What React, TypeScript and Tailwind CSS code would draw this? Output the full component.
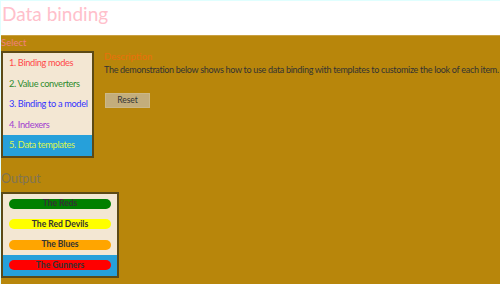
import React, { useState } from 'react';

const scenarios = [
  { title: '1. Binding modes', color: 'text-[#ff4a4a]' },
  { title: '2. Value converters', color: 'text-[#2e8b2e]' },
  { title: '3. Binding to a model', color: 'text-[#3434ff]' },
  { title: '4. Indexers', color: 'text-[#a040d0]' },
  { title: '5. Data templates', color: 'text-[#dcf550]' },
];

const teams = [
  { name: 'The Reds', pill: 'bg-[#008000]' },
  { name: 'The Red Devils', pill: 'bg-[#ffff00]' },
  { name: 'The Blues', pill: 'bg-[#ffa500]' },
  { name: 'The Gunners', pill: 'bg-[#ff0000]' },
];

export default function App() {
  const [selected, setSelected] = useState(4);
  const [team, setTeam] = useState(3);

  return (
    <div className="w-[500px] h-[284px] overflow-hidden bg-white border-l border-t border-[#e0ffff] font-['Lato',sans-serif] flex flex-col">
      {/* Header */}
      <div className="h-[34px] shrink-0 pl-[1px] pt-[1px]">
        <h1 className="text-[19px] leading-[24px] text-[#ffc0cb] whitespace-nowrap">Data binding</h1>
      </div>

      {/* Main */}
      <div className="flex-1 bg-[#b8860b] border-t border-[#c9a042] flex flex-col">
        <div className="text-[9.5px] leading-[14px] text-[#f08080] h-[15px]">Select</div>
        <div className="flex">
          <ul className="w-[93px] border-2 border-[#5c4a16] bg-[#f3e7d3] shrink-0">
            {scenarios.map((s, i) => (
              <li
                key={s.title}
                onClick={() => setSelected(i)}
                className={`h-[20.5px] pl-[6px] flex items-center text-[9.25px] tracking-[-0.35px] whitespace-nowrap cursor-pointer ${s.color} ${
                  i === selected ? 'bg-[#26a0da]' : ''
                }`}
              >
                {s.title}
              </li>
            ))}
          </ul>

          <div className="pl-[10px]">
            <h2 className="text-[9.5px] leading-[12px] text-[#e8700a]">Description</h2>
            <p className="text-[9px] leading-[14px] text-[#333] tracking-[-0.3px] whitespace-nowrap">
              The demonstration below shows how to use data binding with templates to customize the look of each item.
            </p>
            <button className="mt-[16px] ml-[1px] w-[45px] h-[15px] bg-[#c3ad7c] text-[8.5px] text-[#333] border border-[#cbb888] flex items-center justify-center">
              Reset
            </button>
          </div>
        </div>

        <h2 className="mt-[12px] text-[12.5px] leading-[18px] text-[#7f7454]">Output</h2>
        <ul className="mt-[4px] w-[118px] border-2 border-[#5c4a16] bg-[#f3e7d3]">
          {teams.map((t, i) => (
            <li
              key={t.name}
              onClick={() => setTeam(i)}
              className={`h-[20.5px] px-[6px] flex items-center cursor-pointer ${i === team ? 'bg-[#26a0da]' : ''}`}
            >
              <div className={`w-full h-[10px] rounded-full ${t.pill} flex items-center justify-center text-[8.5px] font-bold text-[#333] whitespace-nowrap`}>
                {t.name}
              </div>
            </li>
          ))}
        </ul>
      </div>
    </div>
  );
}
